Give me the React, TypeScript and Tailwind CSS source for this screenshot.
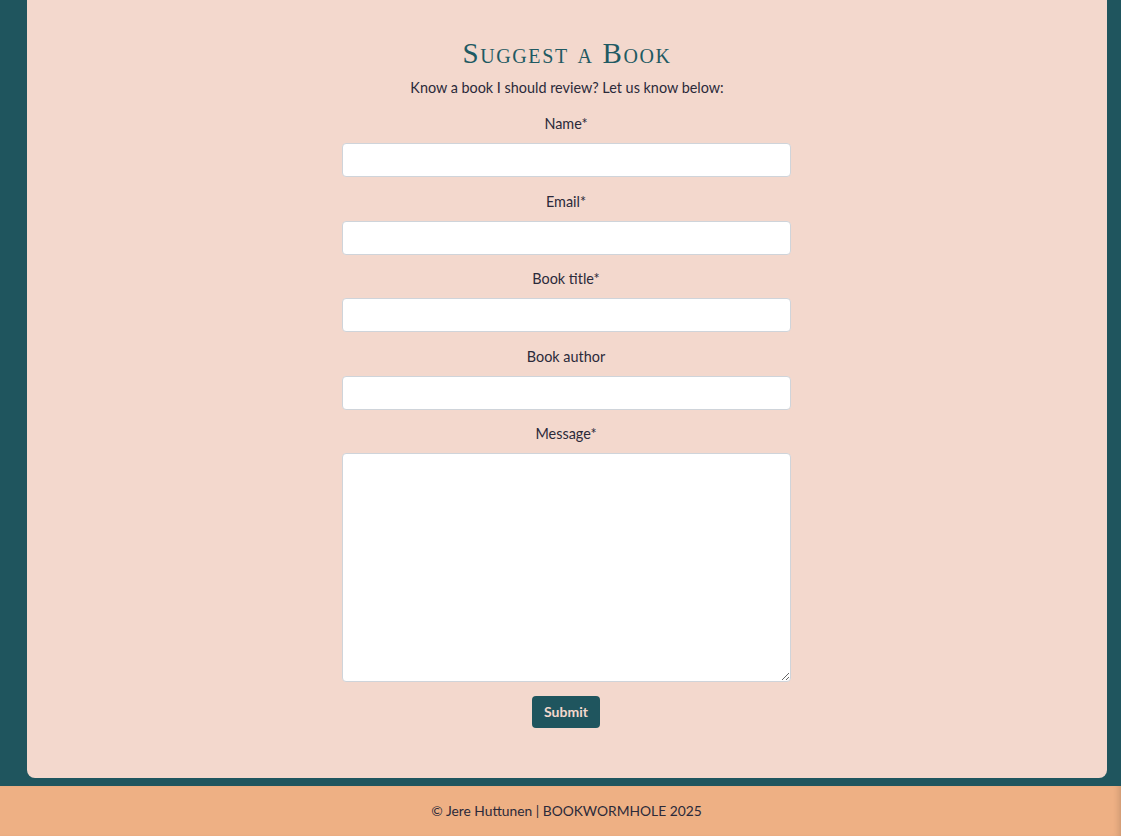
import React from "react";

const fields = [
  { label: "Name*", type: "text" },
  { label: "Email*", type: "email" },
  { label: "Book title*", type: "text" },
  { label: "Book author", type: "text" },
];

const App = () => {
  return (
    <div className="min-h-[836px] bg-[#1f555e] font-['Lato',sans-serif] text-[#2b2a3a] flex flex-col">
      <main className="ml-[27px] mr-[14px] bg-[#f3d8cd] rounded-b-lg pt-[35px] pb-[50px] flex flex-col items-center">
        <h2 className="font-['Liberation_Serif',serif] [font-variant:small-caps] text-[29px] leading-[36px] tracking-[1.6px] text-[#1f5a63]">
          Suggest a Book
        </h2>
        <p className="text-[14.4px] leading-5 mt-[7px]">
          Know a book I should review? Let us know below:
        </p>
        <form className="mt-4 mr-[2px] w-[449px] flex flex-col items-center">
          {fields.map((f) => (
            <div key={f.label} className="w-full flex flex-col items-center mb-[14.5px]">
              <label className="text-[14.4px] leading-5 mb-[9px]">{f.label}</label>
              <input
                type={f.type}
                className="w-full h-[34px] bg-white border border-[#cfd4da] rounded-[4px]"
              />
            </div>
          ))}
          <div className="w-full flex flex-col items-center">
            <label className="text-[14.4px] leading-5 mb-[9px]">Message*</label>
            <textarea className="w-full h-[229px] bg-white border border-[#cfd4da] rounded-[4px] block" />
          </div>
          <button
            type="button"
            className="mt-[14px] h-8 w-[68px] bg-[#1f555e] text-[#f3d8cd] text-sm font-bold rounded-[4px]"
          >
            Submit
          </button>
        </form>
      </main>
      <footer className="mt-2 h-[50px] bg-[#eeb084] flex items-center justify-center pl-3 text-[13.8px] shadow-[inset_-6px_0_6px_-4px_rgba(0,0,0,0.15)]">
        © Jere Huttunen | BOOKWORMHOLE 2025
      </footer>
    </div>
  );
};

export default App;
